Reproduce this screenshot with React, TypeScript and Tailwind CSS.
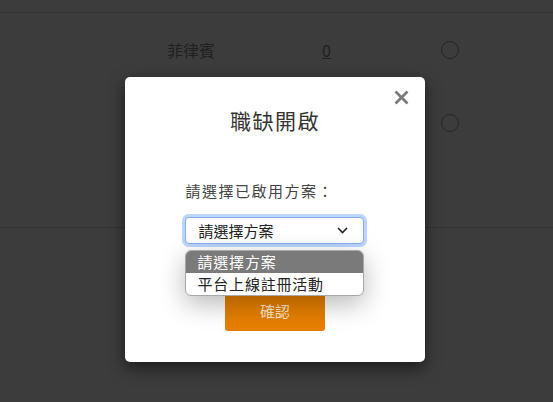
import React from "react";

const cjk = { fontFamily: '"Noto Sans CJK TC", "Noto Sans", sans-serif' };

type Row = {
  country: string;
  count: string;
};

const rows: Row[] = [
  { country: "菲律賓", count: "0" },
  { country: "", count: "" },
];

function Radio() {
  return <span className="block h-[18px] w-[18px] rounded-full border-[1.5px] border-[#9a9a9a]" />;
}

function BackgroundPage() {
  return (
    <div className="flex h-full w-full flex-col bg-white" style={cjk}>
      <div className="h-[13px] border-b border-[#d8d8d8]" />
      <div className="flex h-[215px] flex-col border-b border-[#d8d8d8]">
        {rows.map((row, i) => (
          <div key={i} className="flex h-[73px] items-center">
            <span className="ml-[167px] w-[48px] text-[16px] text-[#8a8a8a]">{row.country}</span>
            <span className="ml-[107px] w-[12px] text-[16px] text-[#8a8a8a] underline">{row.count}</span>
            <span className="ml-[107px]">
              <Radio />
            </span>
          </div>
        ))}
      </div>
    </div>
  );
}

function Chevron() {
  return (
    <svg width="11" height="7" viewBox="0 0 11 7" fill="none">
      <polyline points="1,1 5.5,5.5 10,1" stroke="#222" strokeWidth="1.6" />
    </svg>
  );
}

function CloseIcon() {
  return (
    <svg width="15" height="15" viewBox="0 0 15 15">
      <line x1="1.5" y1="1.5" x2="13.5" y2="13.5" stroke="#7a7a7a" strokeWidth="2.6" />
      <line x1="13.5" y1="1.5" x2="1.5" y2="13.5" stroke="#7a7a7a" strokeWidth="2.6" />
    </svg>
  );
}

function PlanSelect() {
  return (
    <div className="relative w-[179px]">
      <div className="flex h-[27px] items-center justify-between rounded-[4px] border border-[#86aef0] bg-white pl-[13px] pr-[15px] shadow-[0_0_0_3px_#bcd5fb]">
        <span className="text-[15px] leading-[20px] text-[#222]">請選擇方案</span>
        <Chevron />
      </div>
      <ul className="absolute left-0 top-[33px] z-10 w-[179px] overflow-hidden rounded-[6px] border border-[#a8a8a8] bg-white shadow-[0_8px_26px_rgba(0,0,0,0.28)]">
        <li className="flex h-[22px] items-center bg-[#7a7a7a] pl-[12px] text-[15px] leading-[20px] tracking-[0.8px] text-white">
          請選擇方案
        </li>
        <li className="flex h-[22px] items-center pl-[12px] text-[15px] leading-[20px] tracking-[0.8px] text-[#222]">
          平台上線註冊活動
        </li>
      </ul>
    </div>
  );
}

export default function App() {
  return (
    <div className="relative h-[402px] w-[553px] overflow-hidden">
      <BackgroundPage />

      <div className="absolute inset-0 flex justify-center bg-black/[0.765] pt-[77px]">
        <div
          className="relative ml-[-3px] flex h-[285px] w-[300px] flex-col items-center rounded-[5px] bg-white pt-[29px] shadow-[0_6px_16px_rgba(0,0,0,0.55)]"
          style={cjk}
        >
          <button type="button" className="absolute right-[16px] top-[13px]">
            <CloseIcon />
          </button>

          <h2 className="h-[28px] text-[21px] font-normal leading-[28px] tracking-[1.5px] text-[#333]">
            職缺開啟
          </h2>

          <div className="ml-[-2px] mt-[46px] flex w-[179px] flex-col items-start">
            <p className="ml-[1px] h-[22px] whitespace-nowrap text-[15px] leading-[22px] tracking-[1.5px] text-[#444]">
              請選擇已啟用方案：
            </p>
            <div className="mt-[15px]">
              <PlanSelect />
            </div>
          </div>

          <button
            type="button"
            className="mt-[47px] h-[40px] w-[100px] rounded-[3px] bg-[#e57f00] text-[15px] text-[#fbe6cc]"
          >
            確認
          </button>
        </div>
      </div>
    </div>
  );
}
